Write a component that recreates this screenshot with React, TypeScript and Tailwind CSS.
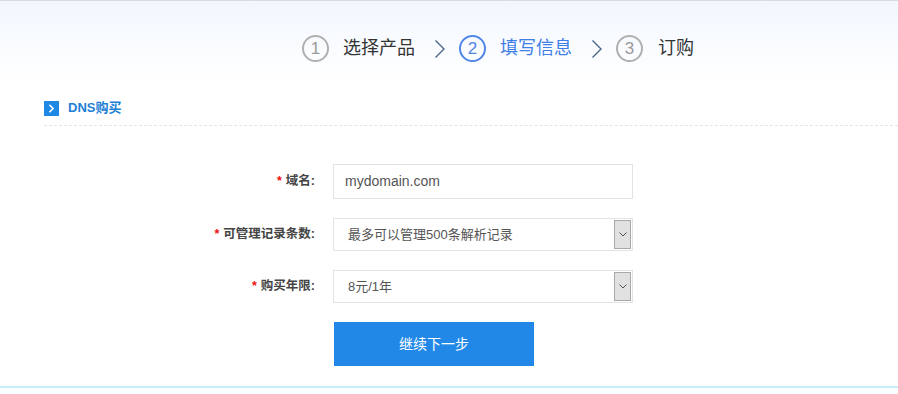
import { ChevronRight } from "lucide-react";

const font = { fontFamily: '"Liberation Sans", "Noto Sans CJK SC", sans-serif' };

function StepCircle({ n, active }: { n: number; active?: boolean }) {
  return (
    <div
      className={`w-[27px] h-[27px] rounded-full border-2 flex items-center justify-center text-[17px] leading-none ${
        active ? "border-[#4f86ea] text-[#4f86ea]" : "border-[#b0b0b0] text-[#9a9a9a]"
      }`}
    >
      {n}
    </div>
  );
}

function Arrow() {
  return (
    <svg width="12" height="20" viewBox="0 0 12 20" className="ml-[19px] mr-[13px]">
      <path d="M1.5 1.5 L10 10 L1.5 18.5" fill="none" stroke="#4a6688" strokeWidth="1.4" />
    </svg>
  );
}

function SelectBox({ value }: { value: string }) {
  return (
    <div className="relative w-[300px] h-[33px] border border-[#e3e3e3] bg-white flex items-center pl-[14px] text-[13px] text-[#555]">
      {value}
      <div className="absolute right-[1px] top-[1px] bottom-[1px] w-[17px] bg-[#e1e1e1] border border-[#a8a8a8] flex items-center justify-center">
        <svg width="8" height="5" viewBox="0 0 8 5">
          <path d="M0.5 0.5 L4 4 L7.5 0.5" fill="none" stroke="#555" strokeWidth="1" />
        </svg>
      </div>
    </div>
  );
}

function Label({ text }: { text: string }) {
  return (
    <div className="w-[315px] text-right text-[12.5px] font-bold text-[#444]">
      <span className="text-[#e11] mr-[4px]">*</span>
      {text}:
    </div>
  );
}

export default function App() {
  return (
    <div className="w-[898px] h-[394px] bg-white flex flex-col" style={font}>
      <div className="border-t border-[#d8dde3] bg-gradient-to-b from-[#f2f7fe] to-white h-[84px] flex flex-col">
        <div className="flex items-center pl-[302px] pt-[34px] text-[18px]">
          <StepCircle n={1} />
          <span className="ml-[14px] text-[#333]">选择产品</span>
          <Arrow />
          <StepCircle n={2} active />
          <span className="ml-[14px] text-[#3f7ee6]">填写信息</span>
          <Arrow />
          <StepCircle n={3} />
          <span className="ml-[15px] text-[#333]">订购</span>
        </div>
      </div>

      <div className="mx-[44px] flex items-center h-[34px] mt-[7px]">
        <div className="w-[15px] h-[15px] bg-[#1e88e5] flex items-center justify-center">
          <ChevronRight size={13} strokeWidth={3} className="text-white" />
        </div>
        <span className="ml-[9px] text-[13px] font-bold text-[#1d7fd6]">DNS购买</span>
      </div>
      <div className="ml-[44px] border-t border-dashed border-[#e2e6ea]" />

      <div className="flex flex-col gap-[19px] mt-[38px]">
        <div className="flex items-center">
          <Label text="域名" />
          <div className="ml-[18px] w-[300px] h-[35px] border border-[#e3e3e3] flex items-center pl-[11px] text-[14px] text-[#555]">
            mydomain.com
          </div>
        </div>
        <div className="flex items-center">
          <Label text="可管理记录条数" />
          <div className="ml-[18px]">
            <SelectBox value="最多可以管理500条解析记录" />
          </div>
        </div>
        <div className="flex items-center">
          <Label text="购买年限" />
          <div className="ml-[18px]">
            <SelectBox value="8元/1年" />
          </div>
        </div>
        <div className="flex">
          <button className="ml-[334px] w-[200px] h-[44px] bg-[#2288e8] text-white text-[14px]">继续下一步</button>
        </div>
      </div>

      <div className="mt-[20px] border-t-2 border-[#c8eefb] bg-[#fafdff] flex-1" />
    </div>
  );
}
